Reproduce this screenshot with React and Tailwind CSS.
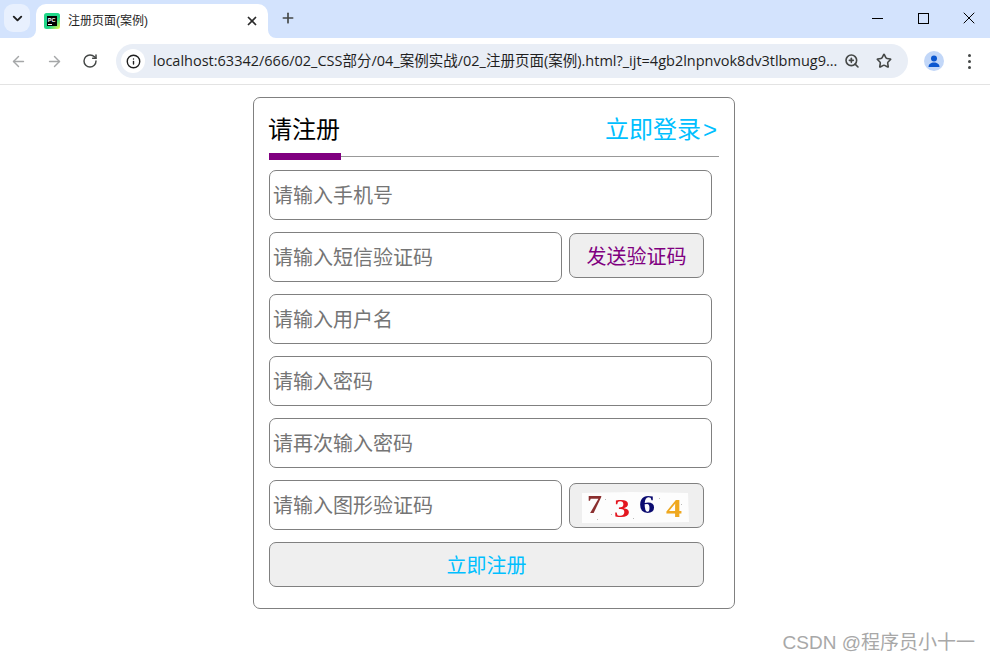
import { ArrowLeft, ArrowRight, ChevronDown, Info, Plus, RotateCw, Star, X, ZoomIn } from 'lucide-react';

const cjk = { fontFamily: '"Liberation Sans", "Noto Sans CJK SC", sans-serif' };

function PcIcon() {
  return (
    <svg width="16" height="16" viewBox="0 0 16 16">
      <defs>
        <linearGradient id="pc" x1="0" y1="0" x2="1" y2="1">
          <stop offset="0" stopColor="#21d789" />
          <stop offset="0.6" stopColor="#21d789" />
          <stop offset="1" stopColor="#fcf84a" />
        </linearGradient>
      </defs>
      <rect width="16" height="16" rx="2.5" fill="url(#pc)" />
      <rect x="3" y="3" width="10" height="10" fill="#000" />
      <rect x="4" y="11" width="4" height="1" fill="#fff" />
      <text x="3.8" y="8.6" fontSize="5.5" fontWeight="700" fill="#fff" fontFamily="Liberation Sans">PC</text>
    </svg>
  );
}

function TabFlare({ className, d }) {
  return (
    <svg width="8" height="8" viewBox="0 0 8 8" className={`absolute bottom-0 ${className}`}>
      <path d={d} fill="#fff" />
    </svg>
  );
}

function Captcha() {
  return (
    <svg width="108" height="34" viewBox="0 0 108 34" className="ml-[11px] mt-[2px] blur-[0.4px]">
      <polygon points="1,3 50,2 107,3 108,32 54,33 1,33" fill="#fdfdfd" />
      <g fontFamily="Liberation Serif" fontWeight="700" fontSize="25">
        <text x="6" y="23" fill="#8b2f2f" textLength="15" lengthAdjust="spacingAndGlyphs">7</text>
        <text x="33" y="27" fill="#e3161f" textLength="16" lengthAdjust="spacingAndGlyphs">3</text>
        <text x="58" y="23" fill="#0b0b70" textLength="16" lengthAdjust="spacingAndGlyphs">6</text>
        <text x="85" y="27" fill="#efa81f" textLength="16" lengthAdjust="spacingAndGlyphs">4</text>
      </g>
      <g fill="#bbb">
        <rect x="24" y="9" width="1" height="1" />
        <rect x="30" y="24" width="1" height="1" />
        <rect x="52" y="28" width="1" height="1" />
        <rect x="78" y="8" width="1" height="1" />
        <rect x="16" y="29" width="1" height="1" />
        <rect x="100" y="14" width="1" height="1" />
      </g>
    </svg>
  );
}

function Field({ placeholder, wide }) {
  return (
    <input
      placeholder={placeholder}
      className={`${wide ? 'w-[443px]' : 'w-[293px]'} h-[50px] shrink-0 rounded-[7px] border border-[#808080] bg-white pl-[3px] pt-[2px] text-[20px] text-black outline-none placeholder:text-[#757575]`}
      style={cjk}
    />
  );
}

export default function App() {
  return (
    <div className="relative h-[662px] w-[990px] overflow-hidden bg-white" style={cjk}>
      {/* browser chrome */}
      <div className="flex h-[38px] items-start bg-[#d3e3fd]">
        <button className="ml-[4px] mt-[4px] flex h-[28px] w-[26px] items-center justify-center rounded-[9px] bg-[#e8f0fe] text-[#1f1f1f]">
          <ChevronDown size={15} strokeWidth={3} />
        </button>
        <div className="relative ml-[6px] mt-[4px] flex h-[34px] w-[232px] items-center rounded-t-[10px] bg-white pl-[8px] pr-[9px]">
          <TabFlare className="-left-[8px]" d="M8 0V8H0A8 8 0 0 0 8 0Z" />
          <PcIcon />
          <span className="ml-[8px] flex-1 text-[12px] text-[#1f1f1f]">注册页面(案例)</span>
          <X size={14} strokeWidth={3} className="text-[#2a2a2a]" />
          <TabFlare className="-right-[8px]" d="M0 0V8H8A8 8 0 0 1 0 0Z" />
        </div>
        <button className="ml-[10px] mt-[8px] flex h-[20px] w-[20px] items-center justify-center text-[#444746]">
          <Plus size={16} strokeWidth={2.5} />
        </button>
        <div className="ml-auto -mr-[2px] flex h-[36px] items-center text-black">
          <div className="flex w-[46px] justify-center">
            <div className="h-px w-[11px] bg-black" />
          </div>
          <div className="flex w-[46px] justify-center">
            <div className="h-[11px] w-[11px] border border-black" />
          </div>
          <div className="flex w-[46px] justify-center"><X size={20} strokeWidth={1.2} /></div>
        </div>
      </div>
      <div className="flex h-[47px] items-center rounded-tr-[10px] border-b border-[#e3e3e3] bg-white">
        <ArrowLeft size={17} strokeWidth={2} className="ml-[10px] text-[#a5a7a8]" />
        <ArrowRight size={17} strokeWidth={2} className="ml-[19px] text-[#a5a7a8]" />
        <RotateCw size={16} strokeWidth={2.2} className="ml-[19px] text-[#444746]" />
        <div className="ml-[18px] flex h-[34px] w-[792px] items-center rounded-full bg-[#e9eef6] pl-[5px]">
          <div className="flex h-[24px] w-[24px] items-center justify-center rounded-full bg-white text-[#1f1f1f]">
            <Info size={15} strokeWidth={2.2} />
          </div>
          <span className="ml-[8px] w-[686px] whitespace-nowrap text-[14.5px] text-[#1f1f1f]" style={{ fontFamily: '"Open Sans", "Noto Sans CJK SC", sans-serif' }}>
            localhost:63342/666/02_CSS部分/04_案例实战/02_注册页面(案例).html?_ijt=4gb2lnpnvok8dv3tlbmug9...
          </span>
          <ZoomIn size={16} strokeWidth={2.4} className="ml-[5px] text-[#444746]" />
          <Star size={16} strokeWidth={2.4} className="ml-[16px] text-[#444746]" />
        </div>
        <div className="ml-[16px] flex h-[20px] w-[20px] items-center justify-center overflow-hidden rounded-full bg-[#c2d7f8]">
          <svg width="14" height="14" viewBox="0 0 14 14">
            <circle cx="7" cy="4.5" r="3" fill="#0b57d0" />
            <path d="M1.500 13c0-3 2.500-4.500 5.500-4.500s5.500 1.500 5.500 4.500z" fill="#0b57d0" />
          </svg>
        </div>
        <div className="ml-[24px] flex flex-col gap-[3px]">
          <span className="h-[3px] w-[3px] rounded-full bg-[#444746]" />
          <span className="h-[3px] w-[3px] rounded-full bg-[#444746]" />
          <span className="h-[3px] w-[3px] rounded-full bg-[#444746]" />
        </div>
      </div>

      {/* page */}
      <div className="ml-[253px] mt-[12px] h-[512px] w-[482px] rounded-[7px] border border-[#808080] px-[15px] pt-[14px]">
        <div className="flex h-[45px] w-[450px] items-start justify-between border-b border-[#999] leading-[36px]">
          <div className="h-[48px] w-[72px] border-b-[7px] border-[#800080] indent-[-1px] text-[24px] text-black">请注册</div>
          <a className="pr-[2px] text-[24px] text-[#00bfff]">立即登录<span className="pl-[2px]">&gt;</span></a>
        </div>
        <div className="mt-[13px] flex flex-col gap-[12px]">
          <Field wide placeholder="请输入手机号" />
          <div className="flex items-start gap-[7px]">
            <Field placeholder="请输入短信验证码" />
            <button className="mt-px h-[45px] w-[135px] rounded-[7px] border border-[#808080] bg-[#efefef] pt-[2px] text-[20px] text-[#800080]">发送验证码</button>
          </div>
          <Field wide placeholder="请输入用户名" />
          <Field wide placeholder="请输入密码" />
          <Field wide placeholder="请再次输入密码" />
          <div className="flex items-start gap-[7px]">
            <Field placeholder="请输入图形验证码" />
            <button className="mt-[3px] flex h-[45px] w-[135px] items-center rounded-[7px] border border-[#808080] bg-[#efefef]">
              <Captcha />
            </button>
          </div>
          <button className="h-[45px] w-[435px] rounded-[7px] border border-[#808080] bg-[#efefef] pt-[2px] text-[20px] text-[#00bfff]">立即注册</button>
        </div>
      </div>

      {/* watermark */}
      <div className="absolute bottom-[7px] right-[15px] text-[19px] leading-[24px] text-[#a8a8a8]">CSDN @程序员小十一</div>
    </div>
  );
}
